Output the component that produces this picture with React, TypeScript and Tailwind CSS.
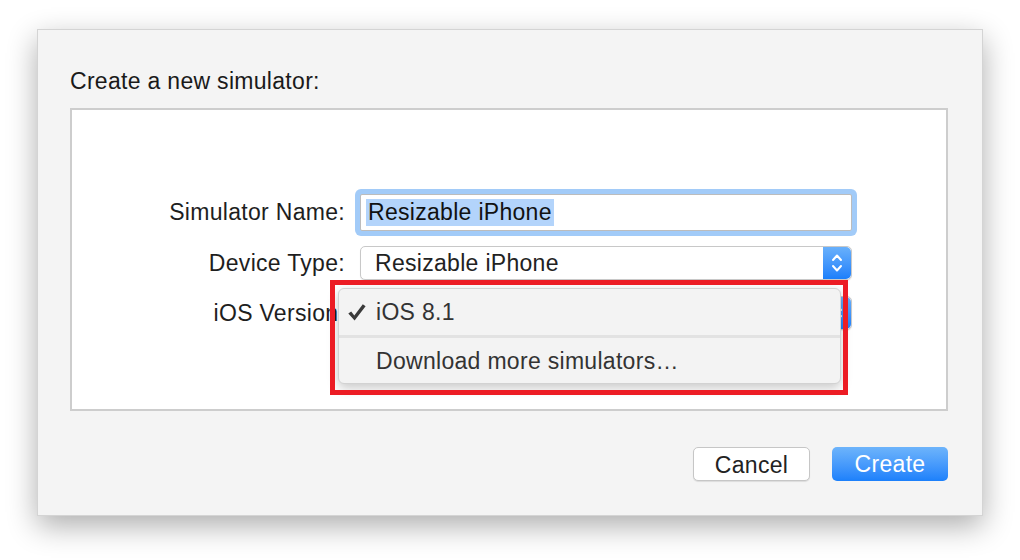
import React from 'react';

const font = { fontFamily: '"Liberation Sans", Arial, sans-serif' };

function Stepper() {
    return (
        <div className="flex w-[28px] items-center justify-center self-stretch rounded-r-[5px] bg-gradient-to-b from-[#68b0fb] to-[#1a7ffb]">
            <svg width="12" height="22" viewBox="0 0 12 22" fill="none" stroke="white" strokeWidth="2" strokeLinecap="round" strokeLinejoin="round">
                <path d="M2 8 L6 3.5 L10 8" />
                <path d="M2 14 L6 18.5 L10 14" />
            </svg>
        </div>
    );
}

function Popup({ value }: { value: string }) {
    return (
        <div className="flex h-[34px] w-[492px] items-stretch rounded-[5px] border border-[#c8c8c8] bg-white shadow-[0_1px_1px_rgba(0,0,0,0.08)]">
            <div className="flex flex-1 items-center pl-[14px] text-[23px] tracking-[0.3px] text-[#222]">{value}</div>
            <Stepper />
        </div>
    );
}

function Row({ label, children }: { label: string; children: React.ReactNode }) {
    return (
        <div className="flex items-center">
            <div className="w-[288px] pr-[15px] text-right text-[23px] tracking-[0.3px] text-[#1e1e1e]">{label}</div>
            {children}
        </div>
    );
}

export default function App() {
    return (
        <div className="relative h-[560px] w-[1020px] bg-white pl-[37px] pt-[29px]" style={font}>
            {/* dialog */}
            <div className="flex h-[487px] w-[946px] flex-col border border-[#d4d4d4] bg-[#f4f4f4] pl-[32px] pr-[34px] pt-[39px] shadow-[0_10px_28px_rgba(0,0,0,0.32)]">
                <div className="h-[24px] text-[23px] leading-[24px] tracking-[0.3px] text-[#1a1a1a]">Create a new simulator:</div>

                <div className="mt-[15px] flex h-[303px] w-[878px] flex-col gap-[15px] border-2 border-[#cdcdcd] bg-white pt-[84px]">
                    <Row label="Simulator Name:">
                        <div className="flex h-[37px] w-[492px] items-center rounded-[2px] border border-[#bcbcbc] bg-white pl-[5px] text-[23px] tracking-[0.3px] text-[#111] shadow-[0_0_0_5px_#a2cbf8]">
                            <span className="bg-[#b3d4fb] px-[2px] leading-[27px]">Resizable iPhone</span>
                        </div>
                    </Row>
                    <Row label="Device Type:">
                        <Popup value="Resizable iPhone" />
                    </Row>
                    <Row label="iOS Version:">
                        <Popup value="iOS 8.1" />
                    </Row>
                </div>

                <div className="mt-[36px] flex justify-end gap-[22px]">
                    <button className="h-[34px] w-[117px] rounded-[5px] border border-[#c6c6c6] bg-white text-[23px] tracking-[0.3px] text-[#222] shadow-[0_1px_1px_rgba(0,0,0,0.1)]">
                        Cancel
                    </button>
                    <button className="h-[34px] w-[116px] rounded-[5px] bg-gradient-to-b from-[#6db4fb] to-[#1b80fb] text-[23px] tracking-[0.3px] text-white">
                        Create
                    </button>
                </div>
            </div>

            {/* open menu */}
            <div className="absolute left-[338px] top-[288px] flex h-[96px] w-[503px] flex-col rounded-[6px] border border-[#d2d2d2] bg-[#f3f3f3] shadow-[0_4px_12px_rgba(0,0,0,0.22)]">
                <div className="flex h-[46px] items-center text-[23px] tracking-[0.3px] text-[#333]">
                    <svg className="ml-[9px] mr-[10px]" width="18" height="17" viewBox="0 0 18 17" fill="#3a3a3a">
                        <path d="M0.3 9.6 L3.2 7.6 L6.3 11.4 L14.8 0.3 L17.6 2.3 L6.6 16.6 Z" />
                    </svg>
                    iOS 8.1
                </div>
                <div className="h-[3px] bg-[#e2e2e2]" />
                <div className="flex flex-1 items-center pl-[37px] pt-[2px] text-[23px] tracking-[0.3px] text-[#333]">Download more simulators…</div>
            </div>

            {/* highlight frame */}
            <div className="pointer-events-none absolute left-[330px] top-[280px] h-[115px] w-[518px] border-[5px] border-[#ec1c24]" />
        </div>
    );
}
